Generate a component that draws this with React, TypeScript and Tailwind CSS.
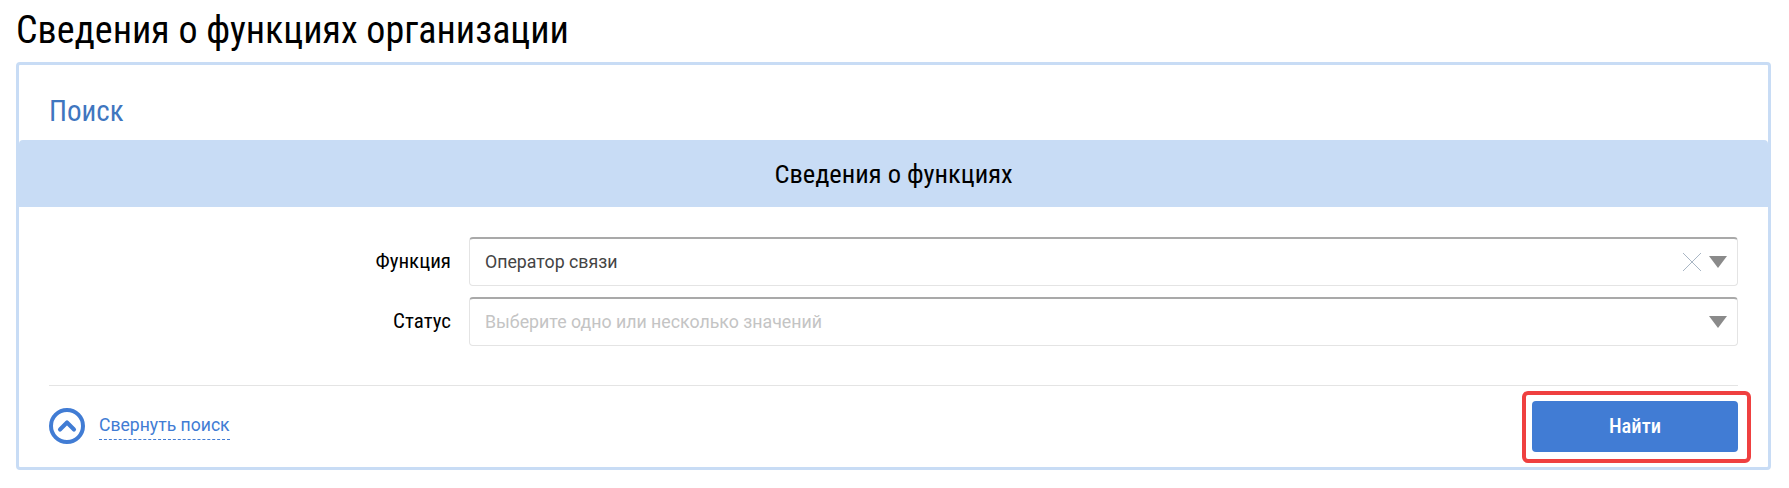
import { ChevronUp } from 'lucide-react';

const condensed = "font-['Roboto_Condensed','Liberation_Sans_Narrow',Roboto,sans-serif] [font-stretch:75%]";
const regular = "font-['Roboto','Liberation_Sans',sans-serif]";

function Caret() {
  return (
    <svg width="18" height="12" viewBox="0 0 18 12" className="shrink-0">
      <path d="M0 0H18L9 12Z" fill="#8a8a8a" />
    </svg>
  );
}

function Field({ label, value, placeholder, clearable }: { label: string; value?: string; placeholder?: string; clearable?: boolean }) {
  return (
    <div className="flex items-center">
      <label className={`${condensed} w-[420px] pr-[18px] text-right text-[21px] text-black`}>{label}</label>
      <div className="flex h-[49px] flex-1 items-center rounded-[4px] border border-[#e4e4e4] border-t-2 border-t-[#a9a9a9] pl-[15px] pr-[10px]">
        <span className={`${regular} flex-1 text-[17.75px] ${value ? 'text-[#444444]' : 'text-[#c4c4c4]'}`}>{value ?? placeholder}</span>
        {clearable && (
          <svg width="20" height="20" viewBox="0 0 20 20" className="mr-[7px]">
            <path d="M1 1L19 19M19 1L1 19" stroke="#a9b6c4" strokeWidth="1" fill="none" />
          </svg>
        )}
        <Caret />
      </div>
    </div>
  );
}

export default function App() {
  return (
    <div className="h-[488px] w-[1789px] bg-white">
      <h1 className={`${condensed} pl-[16px] pt-[8px] text-[38px] leading-[45px] text-black`}>Сведения о функциях организации</h1>

      <div className="ml-[16px] mt-[9px] h-[408px] w-[1755px] rounded-[4px] border-[3px] border-[#c8dcf5]">
        <h2 className={`${condensed} pl-[30px] pb-[5px] pt-[22px] text-[29px] leading-[48px] text-[#3f76bf]`}>Поиск</h2>

        <div className={`${condensed} flex h-[67px] items-center justify-center rounded-t-[4px] bg-[#c8dcf5] text-[26.5px] text-black`}>
          Сведения о функциях
        </div>

        <div className="flex flex-col gap-[11px] pl-[30px] pr-[30px] pt-[30px]">
          <Field label="Функция" value="Оператор связи" clearable />
          <Field label="Статус" placeholder="Выберите одно или несколько значений" />
        </div>

        <div className="ml-[30px] mr-[30px] mt-[39px] flex items-center justify-between border-t border-[#e4e4e4] pt-[15px]">
          <div className="flex items-center gap-[14px] pb-[2px]">
            <div className="flex h-[36px] w-[36px] items-center justify-center rounded-full border-[4px] border-[#417cd4]">
              <ChevronUp size={28} strokeWidth={3.5} className="shrink-0 text-[#417cd4]" />
            </div>
            <a className={`${regular} mt-[2px] border-b border-dashed border-[#417cd4] pb-[3px] text-[17.6px] leading-[22px] text-[#417cd4]`}>Свернуть поиск</a>
          </div>
          <div className="relative">
            <button className={`${condensed} h-[51px] w-[206px] rounded-[4px] bg-[#417cd4] text-[20.5px] font-medium text-white`}>Найти</button>
            <div className="absolute -left-[10px] -right-[13px] -bottom-[11px] -top-[10px] rounded-[6px] border-[4px] border-[#ef4040]" />
          </div>
        </div>
      </div>
    </div>
  );
}
